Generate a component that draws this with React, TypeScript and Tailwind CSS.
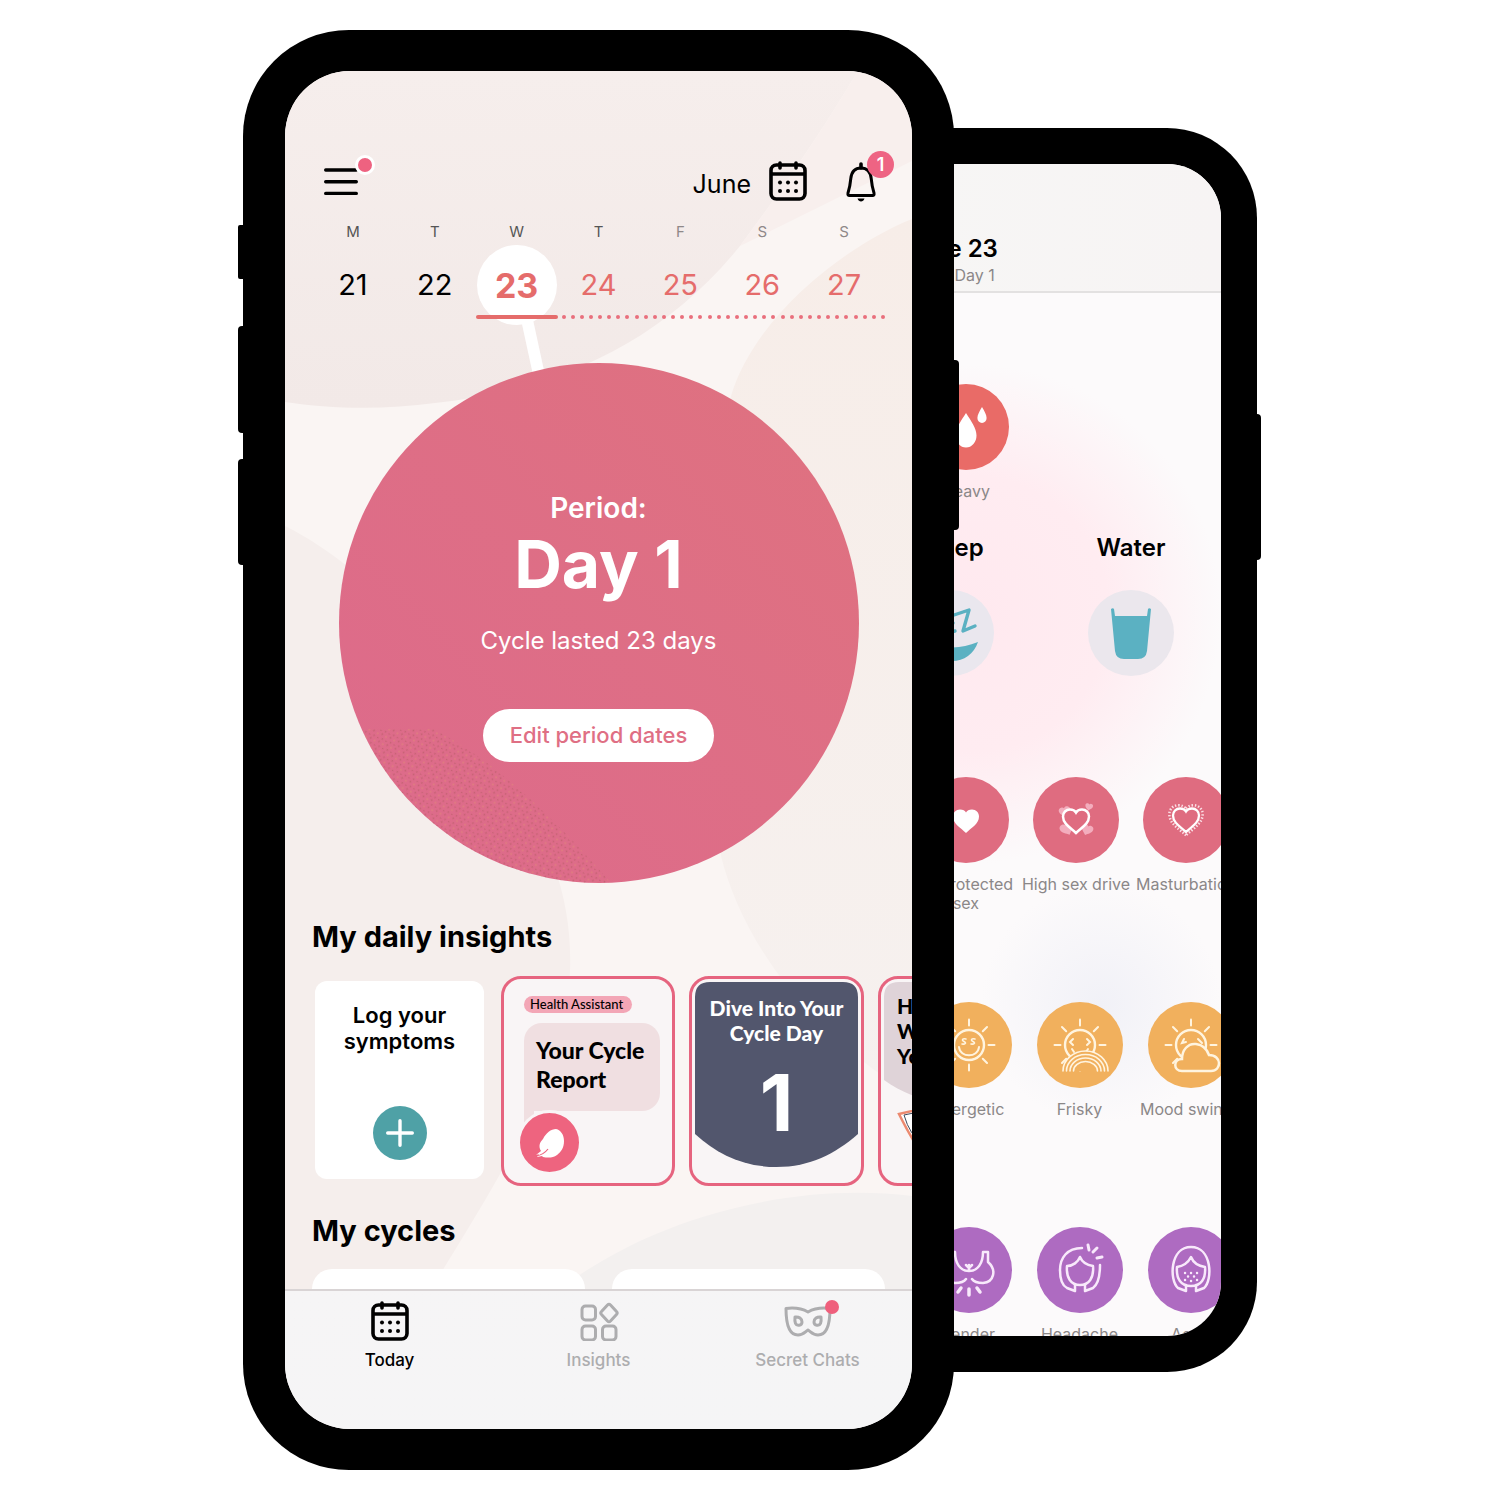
import React from "react";

type IconProps = { className?: string };

function CalendarIcon({ className }: IconProps) {
  return (
    <svg viewBox="0 0 38 40" className={className} fill="none" stroke="currentColor" strokeWidth="3.6" aria-hidden="true">
      <rect x="2" y="4" width="34" height="34" rx="5.5" />
      <path d="M2 13h34" />
      <path d="M11 2v5M27 2v5" strokeLinecap="round" />
      <g fill="currentColor" stroke="none">
        <circle cx="11" cy="21.500" r="2" />
        <circle cx="19" cy="21.500" r="2" />
        <circle cx="27" cy="21.500" r="2" />
        <circle cx="11" cy="30" r="2" />
        <circle cx="19" cy="30" r="2" />
        <circle cx="27" cy="30" r="2" />
      </g>
    </svg>
  );
}

function BellIcon() {
  return (
    <svg viewBox="0 0 30 42" className="h-[42px] w-[30px]" fill="none" stroke="currentColor" strokeWidth="3" aria-hidden="true">
      <path d="M15 3v4" strokeLinecap="round" strokeWidth="3.600" />
      <path d="M15 7c-6.500 0-9.500 4.500-10.200 10.500-.6 7-1.400 10-2.800 14.500q-.5 2.500 1.500 2.500h23q2 0 1.500-2.500c-1.400-4.500-2.200-7.500-2.800-14.500C24.500 11.500 21.500 7 15 7z" strokeLinejoin="round" />
      <path d="M11.500 37.500h7c-.8 2.200-2 3-3.500 3s-2.700-.8-3.500-3z" fill="currentColor" stroke="none" />
    </svg>
  );
}

function ScreenBackdrop() {
  return (
    <svg viewBox="0 0 627 1358" preserveAspectRatio="none" className="absolute inset-0 -z-10 h-full w-full" aria-hidden="true">
      <defs>
        <linearGradient id="dune" x1="0" y1="0" x2="0" y2="1">
          <stop offset="0" stopColor="#f6eeec" />
          <stop offset="1" stopColor="#f2e9e7" />
        </linearGradient>
        <linearGradient id="peach" x1="0" y1="0" x2="0" y2="1">
          <stop offset="0" stopColor="#f7ede8" />
          <stop offset="1" stopColor="#f6f1ef" />
        </linearGradient>
      </defs>
      <rect width="627" height="1358" fill="#faf5f3" />
      <path d="M0 0h573C540 55 500 115 455 175 370 280 260 320 150 332 100 339 45 338 0 331z" fill="url(#dune)" />
      <path d="M573 0C540 55 500 115 455 175L627 90V0z" fill="#f8efed" />
      <path d="M627 148C560 175 470 245 446 325c-20 70 0 140-20 230-10 90 0 170 10 230 20 80 80 170 191 240z" fill="url(#peach)" />
      <path d="M0 455C90 500 160 590 210 680c50 80 78 140 75 220-4 110-80 220-140 320H0z" fill="#f5eeec" />
      <path d="M270 1222C360 1150 500 1110 627 1125v100H270z" fill="#f3f0ef" />
    </svg>
  );
}

const week = [
  { label: "M", day: 21 },
  { label: "T", day: 22 },
  { label: "W", day: 23 },
  { label: "T", day: 24 },
  { label: "F", day: 25 },
  { label: "S", day: 26 },
  { label: "S", day: 27 },
];

function Header() {
  return (
    <header className="flex h-[52px] items-start justify-between pr-[18px] pl-[39px]">
      <button type="button" aria-label="Menu" className="relative mt-[17px]">
        <svg viewBox="0 0 34 28" className="h-[28px] w-[34px]" stroke="#000" strokeWidth="3.400" strokeLinecap="round" aria-hidden="true">
          <path d="M1.700 2h30.600M1.700 13.700h30.600M1.700 25.400h30.600" />
        </svg>
        <span className="absolute -top-[13px] -right-[17px] size-[20px] rounded-full border-3 border-white bg-[#ee6280]" />
      </button>
      <div className="flex items-start">
        <button type="button" className="mt-[10px] flex items-center">
          <span className="mt-[6px] mr-[18px] text-[25px] leading-8">June</span>
          <CalendarIcon className="h-[40px] w-[38px]" />
        </button>
        <button type="button" aria-label="Notifications" className="relative mt-[10px] ml-[39px] pr-[18px]">
          <BellIcon />
          <span className="absolute -top-[10px] right-0 flex size-[27px] items-center justify-center rounded-full bg-[#ee6483] text-[18px] font-semibold text-white">
            1
          </span>
        </button>
      </div>
    </header>
  );
}

function WeekStrip() {
  return (
    <section aria-label="Week" className="mt-[19px] px-[27px]">
      <div className="grid grid-cols-7 text-center">
        {week.map((d) => (
          <div key={d.day}>
            <div className={d.day > 24 ? "text-[15px] leading-5 text-[#8f8888]" : "text-[15px] leading-5 text-[#555]"}>{d.label}</div>
            {d.day === 23 ? (
              <button type="button" className="relative mx-auto mt-[3px] flex size-[80px] items-center justify-center rounded-full bg-white text-[34px] font-bold text-[#e56c6b]">
                {d.day}
                <svg viewBox="0 0 40 60" className="absolute top-[70px] left-[40px] h-[60px] w-[40px]" aria-hidden="true">
                  <path d="M3 0h12l13 60H16z" fill="#fff" />
                </svg>
              </button>
            ) : (
              <button
                type="button"
                className={
                  d.day > 23
                    ? "mt-[3px] h-[80px] w-full text-[29px] text-[#e56c6b]"
                    : "mt-[3px] h-[80px] w-full text-[29px] text-black"
                }
              >
                {d.day}
              </button>
            )}
          </div>
        ))}
      </div>
      <div className="relative -mt-[10px] grid h-[4px] grid-cols-7">
        <div className="col-start-3 rounded-full bg-[#e56c6b]" />
        <div className="col-span-4 flex justify-between pl-[4px]">
          {Array.from({ length: 36 }, (_, i) => (
            <span key={i} className="size-[4px] rounded-full bg-[#e96f7c]" />
          ))}
        </div>
      </div>
    </section>
  );
}

function CycleCircle() {
  return (
    <section className="relative mx-auto mt-[44px] flex aspect-square w-full max-w-[520px] flex-col items-center overflow-hidden rounded-full bg-linear-to-tr from-[#dd6a8c] to-[#df727f] pt-[127px] text-white">
      <svg viewBox="0 0 520 520" className="absolute inset-0 h-full w-full" aria-hidden="true">
        <defs>
          <pattern id="grain" width="9" height="8" patternUnits="userSpaceOnUse" patternTransform="rotate(24)">
            <circle cx="1.500" cy="1.500" r=".9" fill="#c0606e" />
            <circle cx="6" cy="2.500" r=".9" fill="#e0837c" />
            <circle cx="3.500" cy="5.800" r=".9" fill="#c0606e" />
            <circle cx="7.800" cy="6.500" r=".8" fill="#c0606e" />
          </pattern>
        </defs>
        <path d="M20 366h74c50 25 110 75 178 154H60z" fill="url(#grain)" opacity=".85" />
      </svg>
      <p className="relative text-[28px] leading-9 font-semibold">Period:</p>
      <h1 className="relative text-[66px] leading-[76px] font-bold">Day 1</h1>
      <p className="relative mt-[23px] text-[24px] leading-8">Cycle lasted 23 days</p>
      <button type="button" className="relative mt-[52px] h-[53px] rounded-full bg-white px-[27px] text-[22px] font-medium text-[#df6f84]">
        Edit period dates
      </button>
    </section>
  );
}

function Insights() {
  return (
    <section>
      <h2 className="mt-[36px] pl-[27px] text-[29px] leading-9 font-bold">My daily insights</h2>
      <div className="mt-[21px] flex h-[210px] gap-[14px] overflow-hidden pl-[30px]">
        <button type="button" className="mt-[5px] mr-[3px] flex h-[198px] w-[169px] shrink-0 flex-col items-center justify-between rounded-xl bg-white pt-[21px] pb-[19px] text-[22px] leading-[26px] font-semibold">
          <span>
            Log your
            <br />
            symptoms
          </span>
          <span className="flex size-[54px] items-center justify-center rounded-full bg-[#4fa1a6]">
            <svg viewBox="0 0 28 28" className="size-[28px]" stroke="#fff" strokeWidth="3.400" strokeLinecap="round" aria-hidden="true">
              <path d="M14 1.700v24.600M1.700 14h24.600" />
            </svg>
          </span>
        </button>

        <article className="w-[174px] shrink-0 rounded-[20px] border-3 border-[#e6647f] bg-[#f9f5f6] pt-[17px] pl-[20px] font-['Lato',sans-serif]">
          <p className="h-[17px] w-[108px] rounded-full bg-[#f3a6b6] pl-[6px] text-[13px] leading-[16px] font-medium whitespace-nowrap">
            Health Assistant
          </p>
          <div className="relative mt-[10px] h-[88px] w-[136px] rounded-[18px] rounded-bl-none bg-[#f0dfe1] pt-[13px] pl-[12px] text-[23px] leading-[29px] font-black">
            <span className="absolute top-[88px] left-0 h-[20px] w-[10px] bg-[#f0dfe1]" />
            Your Cycle
            <br />
            Report
            <span className="absolute top-[87px] -left-[7px] flex size-[65px] items-center justify-center rounded-full border-3 border-[#f9f5f6] bg-[#ee647f]">
              <svg viewBox="0 0 32 32" className="size-[32px]" aria-hidden="true">
                <path d="M2 28l5-4c-3-5-1-9 2-12 3-6 8-10 13-10 5 1 8 6 8 12 0 7-3 11-7 14-4 3-9 3-14 2l-1-1-5 1 2-3z" fill="#fff" />
                <path d="M2 29c6-1 9-3 12-7" stroke="#ee647f" strokeWidth="1.200" fill="none" />
              </svg>
            </span>
          </div>
        </article>

        <article className="relative w-[175px] shrink-0 rounded-[20px] border-3 border-[#e6647f] bg-[#f9f5f6] pt-[16px] text-center text-white">
          <svg viewBox="0 0 163 185" preserveAspectRatio="none" className="absolute top-[3px] left-[3px] h-[185px] w-[163px]" aria-hidden="true">
            <path d="M0 15Q0 0 15 0h133q15 0 15 15v137C140 172 115 185 81.500 185S22 172 0 152z" fill="#52566d" />
          </svg>
          <h3 className="relative font-['Lato',sans-serif] text-[21px] leading-[25px] font-black">
            Dive Into Your
            <br />
            Cycle Day
          </h3>
          <p className="relative mt-[18px] text-[78px] leading-[80px] font-bold">1</p>
        </article>

        <article className="relative w-[175px] shrink-0 rounded-[20px] border-3 border-[#e6647f] bg-[#f9f5f6] pt-[14px] pl-[16px] font-['Lato',sans-serif]">
          <svg viewBox="0 0 163 185" className="absolute top-[3px] left-[3px] h-[185px] w-[163px]" aria-hidden="true">
            <path d="M0 15Q0 0 15 0h133q15 0 15 15v83c-23 16-48 24-81.500 24S22 114 0 98z" fill="#dfd3d8" />
            <path d="M15 132l34-8-8 50q-10-10-26-42z" fill="#fff" stroke="#ec8a70" strokeWidth="2.500" />
            <path d="M20 133l24-5-6 32q-12-6-18-27z" fill="none" stroke="#3f4a5c" strokeWidth="1" />
          </svg>
          <h3 className="relative text-[21px] leading-[25px] font-black">
            How
            <br />
            Will
            <br />
            You
          </h3>
        </article>
      </div>
    </section>
  );
}

function TabBar() {
  return (
    <nav className="relative grid h-[140px] grid-cols-3 border-t-2 border-[#d9d4d5] bg-linear-to-br from-[#f6f5f6] to-[#f5f5f6] pt-[10px] text-center text-[17px] leading-5 font-medium text-[#adadaf]">
      <a href="#today" className="flex flex-col items-center text-black">
        <CalendarIcon className="h-[40px] w-[38px]" />
        <span className="mt-[9px]">Today</span>
      </a>
      <a href="#insights" className="flex flex-col items-center">
        <svg viewBox="0 0 40 40" className="h-[40px] w-[40px]" fill="none" stroke="currentColor" strokeWidth="3" strokeLinejoin="round" aria-hidden="true">
          <rect x="3" y="5" width="13.500" height="14" rx="3.500" />
          <rect x="3" y="25" width="13.500" height="14" rx="3.500" />
          <rect x="23.500" y="25" width="13.500" height="14" rx="3.500" />
          <path d="M28.500 4q1.500-1.500 3 0l6 6.500q1.500 1.500 0 3l-6 6.500q-1.500 1.500-3 0l-6-6.500q-1.500-1.500 0-3z" />
        </svg>
        <span className="mt-[9px]">Insights</span>
      </a>
      <a href="#chats" className="flex flex-col items-center">
        <span className="relative">
          <svg viewBox="0 0 48 40" className="h-[40px] w-[48px]" fill="none" stroke="currentColor" strokeWidth="3" strokeLinejoin="round" aria-hidden="true">
            <path d="M2 7.500c8-1 15-.5 22 3.500 7-4 14-4.500 22-3.500 0 15-3 26.500-12 26.500-5 0-7-3-10-5-3 2-5 5-10 5C5 34 2 22.500 2 7.500z" />
            <path d="M11 16c4-.5 7 1.500 7 5 0 4-5.500 4-6.500 1.500q-1-2.500-.5-6.500zM37 16c-4-.5-7 1.500-7 5 0 4 5.500 4 6.500 1.500q1-2.500.5-6.500z" />
          </svg>
          <span className="absolute -top-[1px] -right-[7px] size-[14px] rounded-full bg-[#ef5f7c]" />
        </span>
        <span className="mt-[9px]">Secret Chats</span>
      </a>
    </nav>
  );
}

function FrontPhone() {
  return (
    <div className="relative z-10 min-w-0 flex-1 rounded-[106px] bg-black px-[42px] py-[41px]">
      <span className="absolute top-[195px] -left-[5px] h-[54px] w-[10px] rounded-l-xs bg-black" />
      <span className="absolute top-[296px] -left-[5px] h-[107px] w-[10px] rounded-l-sm bg-black" />
      <span className="absolute top-[429px] -left-[5px] h-[106px] w-[10px] rounded-l-sm bg-black" />
      <span className="absolute top-[330px] -right-[5px] h-[170px] w-[10px] rounded-r-sm bg-black" />
      <div className="relative isolate overflow-hidden rounded-[65px] pt-[80px]">
        <ScreenBackdrop />
        <Header />
        <WeekStrip />
        <CycleCircle />
        <Insights />
        <section>
          <h2 className="mt-[27px] pl-[27px] text-[29px] leading-9 font-bold">My cycles</h2>
          <div className="mt-[20px] grid h-[20px] grid-cols-2 gap-[27px] px-[27px]">
            <div className="rounded-t-[20px] bg-white" />
            <div className="rounded-t-[20px] bg-white" />
          </div>
        </section>
        <TabBar />
      </div>
    </div>
  );
}

const rays = [0, 45, 90, 135, 180, 225, 270, 315];

function Sun({ children }: { children?: React.ReactNode }) {
  return (
    <g fill="none" stroke="#fff4df" strokeWidth="2" strokeLinecap="round">
      <circle cx="43" cy="43" r="15" strokeWidth="2.400" />
      {rays.map((a) => (
        <path key={a} d="M43 23.500v-6" transform={`rotate(${a} 43 43)`} />
      ))}
      {children}
    </g>
  );
}

const heart = "M0 12C-5 7-13 3-13-4.500c0-4 3-7 7-7 3 0 5 1.300 6 3 1-1.700 3-3 6-3 4 0 7 3 7 7C13 3 5 7 0 12z";

function Badge({ tone, children }: { tone: string; children: React.ReactNode }) {
  return (
    <span className={`block size-[86px] rounded-full ${tone}`}>
      <svg viewBox="0 0 86 86" className="size-[86px]" aria-hidden="true">
        {children}
      </svg>
    </span>
  );
}

function Symptom({ label, tone, width, children }: { label: string; tone: string; width: string; children: React.ReactNode }) {
  return (
    <button type="button" className={`flex shrink-0 flex-col items-center ${width}`}>
      <Badge tone={tone}>{children}</Badge>
      <span className="mt-[12px] text-[16px] leading-[19px] text-[#8b8788]">{label}</span>
    </button>
  );
}

function BackPhone() {
  return (
    <div className="relative -ml-[43px] w-[346px] shrink-0 rounded-r-[90px] bg-black py-[36px] pr-[36px]">
      <span className="absolute top-[286px] -right-[4px] h-[146px] w-[10px] rounded-r-sm bg-black" />
      <div className="overflow-hidden rounded-r-[54px] bg-[#fcfafb] bg-[radial-gradient(circle_250px_at_60px_450px,#ffe9ef_0%,#ffecf1_55%,transparent_100%),radial-gradient(circle_120px_at_190px_840px,#f1f1f7_0%,transparent_100%)]">
        <header className="border-b-2 border-[#e3e1e1] bg-linear-to-r from-[#f7f6f5] to-[#f7f4f4] pt-[70px] pb-[6px]">
          <div className="flex w-[80px] flex-col items-center whitespace-nowrap">
            <h2 className="text-[24px] leading-[30px] font-semibold">June 23</h2>
            <p className="mt-[1px] text-[16px] leading-5 text-[#8b8788]">Cycle Day 1</p>
          </div>
        </header>

        <div className="mt-[91px] flex">
          <Symptom label="Heavy" tone="bg-[#e96b67]" width="w-[110px]">
            <path d="M43 29c5 8 10.500 15 10.500 22.500a10.500 12 0 0 1-21 0c0-7.500 5.500-14.500 10.500-22.500zM59 23c2.500 4 4.600 8 4.600 11a4.600 5 0 0 1-9.200 0c0-3 2.100-7 4.600-11z" fill="#fff" />
          </Symptom>
        </div>

        <div className="mt-[32px] -ml-[50px] flex">
          <section className="flex w-[180px] shrink-0 flex-col items-center">
            <h3 className="text-[24px] leading-[30px] font-semibold">Sleep</h3>
            <button type="button" aria-label="Sleep" className="mt-[27px]">
              <Badge tone="bg-[#eae7ee]">
                <path d="M20 46c10 14 30 14 50 6-4 12-14 19-26 19-12 0-21-9-24-25z" fill="#5bb1c2" />
                <path d="M46 25l15-5-6 21 12-5M34 38l11-5-7 10 9-2" fill="none" stroke="#5bb1c2" strokeWidth="3.400" strokeLinecap="round" strokeLinejoin="round" />
              </Badge>
            </button>
          </section>
          <section className="flex w-[180px] shrink-0 flex-col items-center">
            <h3 className="text-[24px] leading-[30px] font-semibold">Water</h3>
            <button type="button" aria-label="Water" className="mt-[27px]">
              <Badge tone="bg-[#ebe7ed]">
                <path d="M23 19q2-1.500 3 0l1 7h32l1-7q1-1.500 3 0l-4 42q-1 8-9 8H36q-8 0-9-8z" fill="#5bb1c2" />
              </Badge>
            </button>
          </section>
        </div>

        <div className="mt-[101px] flex h-[136px] items-start">
          <Symptom label="Unprotected sex" tone="bg-[#df6c80]" width="w-[110px]">
            <path d={heart} transform="translate(43 44)" fill="#fff" />
          </Symptom>
          <Symptom label="High sex drive" tone="bg-[#df6c80]" width="w-[110px]">
            <g fill="#f3adbd">
              <path d={heart} transform="translate(32 35) rotate(-15) scale(.45)" />
              <path d={heart} transform="translate(34 52) rotate(-25) scale(.52)" />
              <path d={heart} transform="translate(54 53) rotate(20) scale(.45)" />
              <path d={heart} transform="translate(56 30) rotate(10) scale(.3)" />
            </g>
            <path d={heart} transform="translate(43 44)" fill="#df6c80" stroke="#fff" strokeWidth="2.500" />
          </Symptom>
          <Symptom label="Masturbation" tone="bg-[#df6c80]" width="w-[110px]">
            <path d={heart} transform="translate(43 43)" fill="none" stroke="#fff" strokeWidth="2.300" />
            <path d={heart} transform="translate(43 43) scale(1.280)" fill="none" stroke="#fbdfe5" strokeWidth="2" strokeDasharray="1.100 1.400" />
          </Symptom>
        </div>

        <div className="mt-[89px] flex pl-[2px]">
          <Symptom label="Energetic" tone="bg-[#f1b05d]" width="w-[111px]">
            <Sun>
              <path d="M33 45c1 11 19 11 20 0" />
              <path d="M40 37c-3-1-5 1-2 2.500s1 3-2 2.500M49 37c-3-1-5 1-2 2.500s1 3-2 2.500" strokeWidth="1.600" />
            </Sun>
          </Symptom>
          <Symptom label="Frisky" tone="bg-[#f1b05d]" width="w-[111px]">
            <Sun>
              <path d="M36 37l-3 3 3 3M50 37l3 3-3 3M35 47l2 3M51 47l-2 3" />
              <path d="M26 69a22.500 20 0 0 1 45 0z" fill="#f1b05d" stroke="none" />
              <path d="M26 69a22.500 20 0 0 1 45 0M29.500 69a19 16.500 0 0 1 38 0M33 69a15.500 13 0 0 1 31 0M36.500 69a12 9.500 0 0 1 24 0" strokeWidth="1.600" />
            </Sun>
          </Symptom>
          <Symptom label="Mood swings" tone="bg-[#f1b05d]" width="w-[111px]">
            <Sun>
              <path d="M36 37l-2 4 4-1M50 37l4 4" />
              <path d="M34 69c-9 0-9-12 0-12 0-9 6-16 14-15 7 1 11 5 13 11 13 0 13 16 2 16z" fill="#f1b05d" strokeWidth="2.500" />
            </Sun>
          </Symptom>
        </div>

        <div className="mt-[108px] flex h-[109px] pl-[2px]">
          <Symptom label="Tender" tone="bg-[#ae6bc1]" width="w-[111px]">
            <g fill="none" stroke="#f8e9fb" strokeWidth="2.500" strokeLinecap="round" strokeLinejoin="round">
              <path d="M29 25c0 11 5 19 14 19s14-8 14-19h5v10c9 8 6 20-5 21-5 0-9-1-11-4M29 25h-5v10c-9 8-6 20 5 21 5 0 9-1 11-4M40 38l3 3 3-3M43 38v5" />
              <path d="M35 61l-3 4M51 61l3 4M43 62v6" strokeWidth="3.500" />
            </g>
          </Symptom>
          <Symptom label="Headache" tone="bg-[#ae6bc1]" width="w-[111px]">
            <g fill="none" stroke="#f8e9fb" strokeWidth="2.500" strokeLinecap="round" strokeLinejoin="round">
              <path d="M45 21c-15 0-22 10-22 22 0 10 3 16 7 18l8 3v-6M63 38c0 12-3 20-7 23l-8 3v-6" />
              <path d="M30 39c6 0 11-4 13-9 2 5 7 8 13 9 1 12-4 19-13 19S29 51 30 39z" />
              <path d="M51 18l1 5M60 21l-4 4M65 30l-5 1" strokeWidth="3" />
            </g>
          </Symptom>
          <Symptom label="Acne" tone="bg-[#ae6bc1]" width="w-[111px]">
            <g fill="none" stroke="#f8e9fb" strokeWidth="2.500" strokeLinecap="round" strokeLinejoin="round">
              <path d="M38 58v6l-8-3c-9-8-8-41 13-41s22 33 13 41l-8 3v-6" />
              <path d="M29 40c6-1 11-4 14-10 2 5 7 9 14 10 1 12-4 19-14 19S28 52 29 40z" />
              <path d="M37 46h.1M43 46h.1M49 46h.1M40 49.500h.1M46 49.500h.1M37 53h.1M43 54h.1M49 53h.1" strokeWidth="2.400" />
            </g>
          </Symptom>
        </div>
      </div>
    </div>
  );
}

export default function App() {
  return (
    <main className="flex min-h-screen items-center justify-center bg-white font-['Inter',sans-serif] text-black">
      <div className="flex w-full max-w-[1014px] items-center">
        <FrontPhone />
        <BackPhone />
      </div>
    </main>
  );
}
